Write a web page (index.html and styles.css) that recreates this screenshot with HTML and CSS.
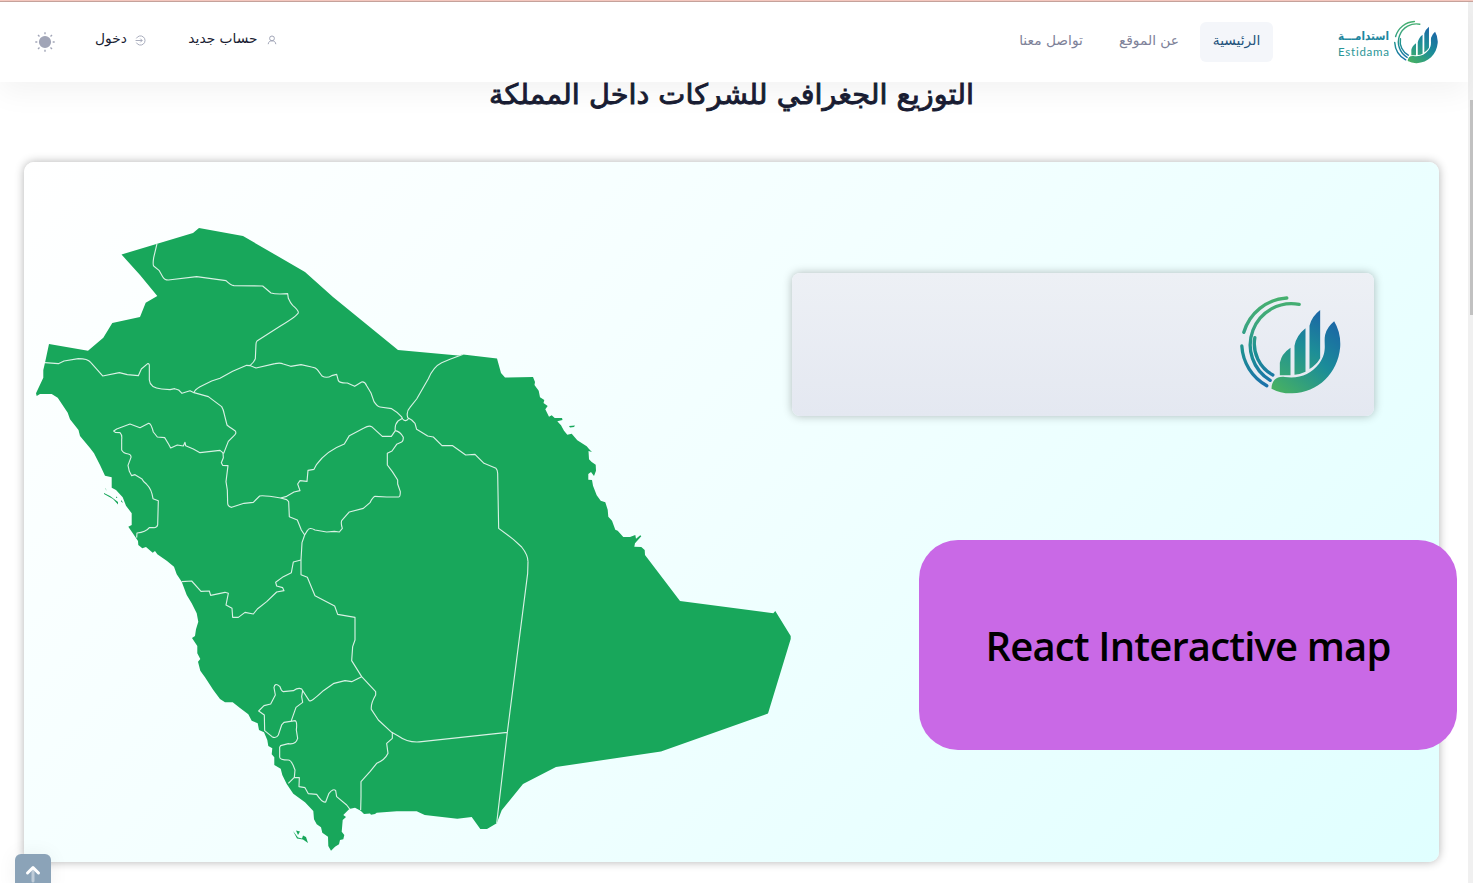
FILE: index.html
```html
<!DOCTYPE html>
<html lang="ar" dir="rtl">
<head>
<meta charset="utf-8">
<title>استدامة</title>
<link rel="stylesheet" href="styles.css">
</head>
<body>
<svg class="defs" width="0" height="0" aria-hidden="true">
  <defs>
    <linearGradient id="arc" gradientUnits="userSpaceOnUse" x1="0" y1="50" x2="0" y2="315"><stop offset="0" stop-color="#46b06f"/><stop offset=".3" stop-color="#3da67e"/><stop offset=".6" stop-color="#1d9092"/><stop offset="1" stop-color="#1a71aa"/></linearGradient>
    <linearGradient id="leaf" gradientUnits="userSpaceOnUse" x1="340" y1="125" x2="175" y2="330"><stop offset="0" stop-color="#1b68a5"/><stop offset=".45" stop-color="#1b8c99"/><stop offset="1" stop-color="#46b064"/></linearGradient>
    <linearGradient id="bars" gradientUnits="userSpaceOnUse" x1="300" y1="100" x2="200" y2="290"><stop offset="0" stop-color="#1b68a5"/><stop offset=".5" stop-color="#1d8e97"/><stop offset="1" stop-color="#38a677"/></linearGradient>
    <symbol id="mark" viewBox="62 46 302 294">
      <g fill="none" stroke="url(#arc)" stroke-width="10" stroke-linecap="round">
        <path d="M73 155A143 143 0 0 1 202 52"/>
        <path d="M67 196A145 145 0 0 0 142 315"/>
        <path d="M239 71A124 124 0 0 0 152 299"/>
        <path d="M106 171A107 107 0 0 0 160 283"/>
      </g>
      <path fill="url(#bars)" d="M181 284V246Q186 219 213 201V284ZM225 282V195Q231 164 258 143V273Q242 281 225 282ZM270 265V135Q276 108 302 88V233Q290 254 270 265Z"/>
      <path fill="url(#leaf)" d="M156 324C157 298 172 286 196 289C240 295 274 281 298 250C326 212 311 189 317 162Q323 139 344 122Q365 157 362 200C355 278 296 336 218 338Q184 339 156 324Z"/>
    </symbol>
  </defs>
</svg>
<div class="topline"></div>
<div class="screen">
  <div class="page">
    <header class="header">
      <a class="brand">
        <svg class="brand-mark"><use href="#mark"/></svg>
        <svg class="brand-name" viewBox="0 0 52 40" direction="ltr">
          <text class="brand-ar" x="51" y="18" direction="rtl" textLength="51" lengthAdjust="spacingAndGlyphs">استدامـــة</text>
          <text class="brand-en" x="0" y="34" textLength="51">Estidama</text>
        </svg>
      </a>
      <nav class="nav">
        <a class="nav-item active"><span>الرئيسية</span></a>
        <a class="nav-item about"><span>عن الموقع</span></a>
        <a class="nav-item contact"><span>تواصل معنا</span></a>
      </nav>
      <div class="tools">
        <a class="tool signup"><svg viewBox="0 0 10 10" class="ico-user"><circle cx="5" cy="3.4" r="2.4"/><path d="M1.2 9.2C1.4 6.9 2.8 5.8 5 5.8S8.600 6.900 8.800 9.200"/></svg><span>حساب جديد</span></a>
        <a class="tool login"><svg viewBox="0 0 12 12" class="ico-login"><path d="M1.500 3.700A5 5 0 1 1 1.500 8.300M.6 6H7.800M5.800 4L7.800 6L5.800 8"/></svg><span>دخول</span></a>
        <svg class="sun" viewBox="0 0 20 20"><circle cx="10" cy="10" r="5.400"/><path d="M10 .3V2.300M10 17.700V19.700M.3 10H2.300M17.700 10H19.700M3 3L4.500 4.500M15.500 15.500L17 17M3 17L4.500 15.500M15.500 4.500L17 3"/></svg>
      </div>
    </header>
    <main class="main">
      <h1 class="title"><svg viewBox="0 0 507 60" direction="rtl"><text x="496" y="22" textLength="485" lengthAdjust="spacingAndGlyphs">التوزيع الجغرافي للشركات داخل المملكة</text></svg></h1>
      <section class="panel">
        <div class="info"><svg class="info-mark"><use href="#mark"/></svg></div>
        <svg class="map" viewBox="36 227 756 625">
          <path class="land" d="M121.500 254.500L193 233L199 228L243 236L305 272L333 297L398 350L458 355.500L463 354.500L497 358.500L501 373L505 377.500L533 377L535 382L534.500 385L538.700 390.700L540 397.300L544.300 400L543.500 403L547.700 406L545.300 409.300L549 416.700L551.700 415.300L554.700 418L562 418L562.500 420L557.300 421.300L561 425.300L564 430.700L567.300 434.700L571.700 433.700L577.300 440.300L586.700 446.300L589 449L592 452L588.500 451L589 459.300L591.700 462L595.700 464.700L596 470.700L594 476L591 472L588.300 474V479.700L592 480L593 485.700L596.700 495.300L600.700 500.700L605.300 502.300L607.700 509.700L608.300 516.700L612 520.700L615.300 529.700L617.700 530.700L623.300 537H630L635.300 535L636 538.700L640.300 535.300L641.300 536.300L635 543.300L634.300 546.700L641.300 547L644.700 550L645 555L680 601L773.300 613.300L775.300 611L790.700 636V639L768 713.500L661 751.500L556 767L523 784L501.700 810.300L496.700 823.300L487 829H480.300L471.700 817L457.300 818.700L424.700 815L416.700 811.300H396.700L376.700 812.700L375 814L371 814.700L370 813.500L364 814L360.700 810.700L355 807.700L349.300 809L343.300 815L346 817L342.700 820L341.700 831.700L344.300 835L343.300 839.300L340 840L339 844.300L335 846.700L331 850.700L328.300 846L328 836.700L322.300 832.700L321 827.300L316.700 824.300L314 819.300L313.300 811L305 802.300L293.300 793.700L286.700 784L282.300 775L280.700 768.700L274.300 765V757.300L271.700 754.300L272.300 748.300L268.300 746L267.300 740L264 732.300L259 730L257.700 723.300L251.700 720.700L248.300 714.300L240 708L232.700 702.300H225L220 699L213.300 690L205 677.300L200.300 670.700L198 661.700L200.300 659L197.300 653.300V646L192 638L195 636L196 629.300L198.300 621.700L196.700 613.300L191.700 603.300L186.700 595L181.700 581.700L176.700 574.300L174 566.700L166.700 560.700L157.300 554.300L155 551L152.700 552.700L146 547L142.300 548.300L138.300 545L138 541L133.300 534L128.300 526.700L131.700 525V513.300L126 505.700L122.700 497.300L116 490L111.700 487.700V477.300L105 475.700L100 465L94 453.300L90 448L80 436L78.500 430L70 419.300L67.700 412.700L57.700 397.700L51.700 394H40L36.700 396L36 393.300L43.300 377.700V370L45 362.700L49 344L88 350.700L103.300 337.700L112.300 323L140 317L145.700 302.700L157.300 296L140 275Z"/>
          <path class="land" d="M105 487.500L107 491L105.500 489ZM104 493L110 496L118 502V504.500L113 499L104 494ZM116 496.500L117.500 497.500L116 498ZM121.500 500L123 503L121 501.500ZM569 426L575 425.500L574 427L570 427.500ZM293 831L298 837.500L302 838.500L303 835.500L306 837L308 843L303 839.500L297 838.500ZM296 830.500L300 831.500L298 835Z"/>
          <g class="border" transform="translate(20 220) scale(.33333)">
            <path d="M411 71L401 113Q398 134 401 138L417 151L428 170Q433 180 445 180L530 170L618 182Q632 196 642 197L728 198L753 219Q762 222 780 222L803 221L805 235Q811 249 818 256Q836 271 835 278Q833 287 780 319L712 362Q708 366 708 372L706 416Q703 426 690 437L680 436L638 454L600 475L575 483L540 500Q523 510 522 518L565 530L605 560Q611 570 613 583L621 615Q626 620 645 632Q652 640 640 649L625 664L611 700"/>
            <path d="M75 428L115 431L132 423L175 416Q203 416 212 427L248 468L298 458L322 464L355 467L364 447L383 431Q389 430 388 440V480Q390 504 425 507L450 509L464 506L476 510L486 520L510 512L522 518"/>
            <path d="M611 700L600 691L540 698L520 687L497 677L495 667L490 678L472 675L452 684L446 673L434 653L412 651L400 636Q393 609 386 610L360 623L330 612L290 627L281 633L286 637L300 638Q307 645 305 658V690Q310 700 325 702Q334 704 333 712L324 736L328 754L335 767L345 764L366 777Q370 786 380 793Q395 807 399 836L415 842L413 915Q411 924 400 923L388 923Q377 937 351 939L350 953"/>
            <path d="M843 1020L820 1026L814 1058L790 1070L767 1087L770 1098L788 1103L792 1112L770 1116L740 1145L712 1167L700 1182L675 1177L655 1192L638 1192L636 1165L618 1155L625 1120L615 1117L572 1126L568 1113L543 1114L515 1083L485 1085"/>
            <path d="M1524 1025L1523 1060L1462 1537L1430 1810M1462 1537L1205 1565Q1165 1570 1135 1548L1115 1537L1075 1500L1054 1468Q1052 1450 1067 1425L1067 1415L1025 1370L995 1322L998 1280L1005 1260V1192L953 1183L944 1158L885 1127L862 1072L843 1064V1020"/>
            <path d="M1025 1370L995 1385L975 1382L942 1390L910 1412Q870 1450 867 1441L845 1407Q835 1402 820 1412L790 1415Q783 1412 780 1400Q764 1386 762 1403L766 1425L752 1452L732 1457L716 1473L733 1485L734 1532L756 1550Q768 1557 775 1545L785 1515L792 1507L826 1502Q832 1505 829 1530L833 1555Q827 1575 805 1571L782 1577L779 1582V1610Q778 1620 805 1620Q815 1620 825 1650L823 1672L805 1690M814 1502L828 1462L848 1447L845 1430L848 1412M823 1672L838 1673L837 1700L855 1703L865 1721L890 1723Q908 1750 917 1746L927 1720Q940 1704 947 1712L950 1730L980 1755L990 1768M1117 1537V1555L1100 1570L1104 1600Q1095 1620 1070 1630L1050 1655L1023 1685V1730L1022 1770"/>
          </g>
          <g class="border" transform="translate(220 300) scale(.33333)">
            <path d="M88 196L108 204L165 191Q180 187 190 192L212 199L243 194L275 201Q288 203 292 209L306 228Q320 236 335 227L350 223L355 242Q360 250 382 249L404 259L425 246Q434 244 440 257L453 279L462 305Q472 320 480 321L515 326Q530 334 545 351L548 357Q557 368 566 355L563 352Q558 335 570 322L590 297L625 236Q640 200 665 188L690 178L730 163"/>
            <path d="M548 355L535 362Q523 375 526 392L514 409H487L455 380Q447 375 432 384L388 407L373 432Q320 452 290 493L282 508L264 511L261 544L240 542L233 552L240 572L222 576L200 589L182 594Q130 585 119 588L100 607L72 610L35 622Q23 620 23 610L22 570L18 545L24 497L8 496L4 488L10 473L9 458"/>
            <path d="M526 392Q540 394 550 412Q550 424 545 426L530 433L516 453L502 460V495L517 515L533 540V552L541 575Q541 590 536 591L500 591L465 589Q458 592 450 608L430 625L388 636L365 662Q362 670 367 685L358 696L343 694L320 696L285 690Q268 680 262 692L254 705L244 690L232 660L208 650L206 605L200 599L182 594M254 705L246 728L243 780"/>
            <path d="M566 355L575 360L585 370L590 388L623 408L640 411L666 437H698L737 465L765 463L792 490L828 505Q833 510 833 520L836 685L880 718L905 741Q924 765 924 785"/>
          </g>
        </svg>
      </section>
      <a class="to-top"><svg viewBox="0 0 36 30"><path class="stem" d="M18 26V15"/><path class="head" d="M12.500 18L18 12.500L23.500 18"/></svg></a>
    </main>
    <div class="caption" dir="ltr">React Interactive map</div>
  </div>
  <aside class="scrollbar"><i></i></aside>
</div>
</body>
</html>
```
FILE: styles.css
```css
* { box-sizing: border-box; }
html, body { margin: 0; height: 883px; overflow: hidden; }
body { background: #fff; font-family: "DejaVu Sans", sans-serif; color: #181c32; }
svg { display: block; flex: none; }
.defs { position: absolute; }
.topline { height: 2px; background: #f6c9c0; border-bottom: 1px solid #c8a49d; }
.screen { display: flex; direction: ltr; height: 881px; }
.page { position: relative; width: 1468px; direction: rtl; }
.scrollbar { width: 5px; padding: 98px 0 0 2px; background: #f0f0f0; }
.scrollbar i { display: block; height: 215px; background: #c1c1c1; }

.header { position: relative; display: flex; align-items: flex-start; height: 80px; padding-right: 30px; background: #fff; box-shadow: 0 10px 30px rgba(0, 0, 0, .05); }
.brand { display: flex; gap: 4px; padding-top: 18px; width: 99px; }
.brand-mark { width: 44px; height: 44px; }
.brand-name { width: 52px; height: 40px; margin-top: 2px; overflow: visible; }
.brand-ar { font: bold 12px "DejaVu Sans", sans-serif; fill: #1f87a0; }
.brand-en { font: 11.5px Lato, sans-serif; font-variant-ligatures: none; fill: #2a9697; direction: ltr; }
.nav { display: flex; align-items: flex-start; margin: 20px 66px 0 0; font-size: 13.800px; color: #7e8299; }
.nav-item { display: flex; justify-content: center; align-items: center; height: 36px; white-space: nowrap; }
.nav-item.active { width: 73px; height: 40px; border-radius: 6px; background: #f4f6fa; color: #23527c; padding-bottom: 4px; }
.about { width: 62px; margin-right: 20px; }
.contact { width: 68px; margin-right: 33px; }
.tools { display: flex; align-items: flex-start; margin: 0 auto 0 35px; font-size: 13.800px; }
.tool { display: flex; align-items: center; height: 36px; margin-top: 19px; white-space: nowrap; }
.tool svg { fill: none; stroke: #a1a5b7; stroke-width: 1; margin-top: 2px; }
.tool span { display: flex; justify-content: center; margin-top: -2px; }
.signup { gap: 9px; margin-left: 42px; }
.signup span { width: 70px; }
.login { gap: 8px; margin-left: 40px; }
.login span { width: 32px; }
.ico-user { width: 10px; height: 10px; }
.ico-login { width: 11px; height: 11px; }
.sun { width: 20px; height: 20px; margin-top: 30px; fill: #a1a5b7; stroke: #a1a5b7; stroke-width: 1.4; }

.main { position: relative; padding: 0 29px 0 24px; }
.title { display: flex; justify-content: center; margin: 0; height: 80px; }
.title svg { width: 507px; height: 60px; overflow: visible; }
.title text { font: 28px "DejaVu Sans", sans-serif; fill: #181c32; stroke: #181c32; stroke-width: .9px; }
.panel { display: flex; width: 1415px; height: 700px; padding: 65px 65px 0 12px; border-radius: 10px; background: linear-gradient(135deg, #fff 0%, #f1ffff 50%, #e0ffff 100%); box-shadow: 0 0 10px rgba(0, 0, 0, .3); }
.info { width: 582px; height: 143px; margin-top: 46px; padding: 23px 33px; border-radius: 8px; background: linear-gradient(#edf0f5, #e4e8f1); box-shadow: 0 0 10px rgba(0, 0, 0, .28); }
.info-mark { width: 101px; height: 98px; }
.map { width: 756px; height: 625px; }
.land { fill: #18a75b; }
.border { fill: none; stroke: #d8f1e4; stroke-width: 3.4; stroke-linejoin: round; }
.caption { position: absolute; left: 919px; top: 538px; z-index: 3; display: flex; align-items: center; justify-content: center; width: 538px; height: 210px; border-radius: 39px; background: #c969e6; color: #000; font: 600 40px "Open Sans", sans-serif; letter-spacing: -.85px; white-space: nowrap; }
.to-top { position: absolute; left: 15px; top: 772px; z-index: 3; width: 36px; height: 36px; border-radius: 6px; background: #8ba3b8; box-shadow: 0 0 20px rgba(0, 0, 0, .06); }
.to-top svg { width: 36px; height: 30px; margin-top: 1px; fill: none; stroke: #fff; stroke-width: 3; stroke-linecap: round; stroke-linejoin: round; }
.stem { opacity: .45; }
```
